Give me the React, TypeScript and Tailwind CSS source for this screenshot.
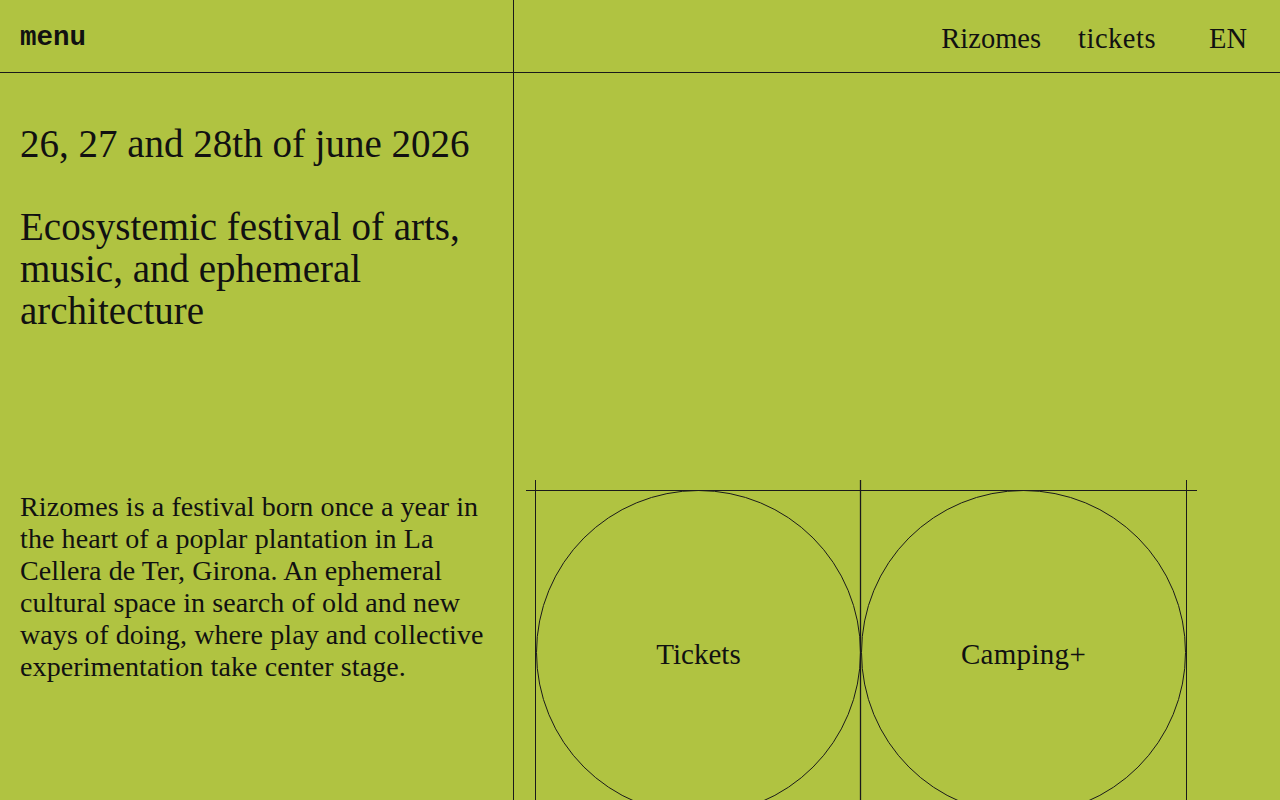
import React from "react";

const serif = { fontFamily: '"Liberation Serif", "Times New Roman", serif' };

const para = [
  "Rizomes is a festival born once a year in",
  "the heart of a poplar plantation in La",
  "Cellera de Ter, Girona. An ephemeral",
  "cultural space in search of old and new",
  "ways of doing, where play and collective",
  "experimentation take center stage.",
];

export default function App() {
  return (
    <div className="w-[1280px] h-[800px] overflow-hidden bg-[#b0c341] text-[#111] flex" style={serif}>
      <div className="w-[514px] shrink-0 border-r border-[#1a1a1a] flex flex-col">
        <div className="h-[73px] shrink-0 border-b border-[#1a1a1a] flex items-center px-5 pt-[4px]">
          <span className="text-[27.5px] leading-none font-bold" style={{ fontFamily: '"Liberation Mono", "Courier New", monospace' }}>menu</span>
        </div>
        <div className="px-5">
          <h2 className="mt-[49px] text-[39px] leading-[44px] font-normal whitespace-nowrap">26, 27 and 28th of june 2026</h2>
          <h1 className="mt-[40px] text-[39px] leading-[42px] font-normal">Ecosystemic festival of arts, music, and ephemeral architecture</h1>
          <p className="mt-[159px] text-[28px] leading-[32px] tracking-[0.1px]">
            {para.map((l) => (
              <span key={l} className="block whitespace-nowrap">{l}</span>
            ))}
          </p>
        </div>
      </div>
      <div className="flex-1 flex flex-col">
        <div className="h-[73px] shrink-0 border-b border-[#1a1a1a] flex items-center justify-end pr-[33px] pt-[6px] text-[28.5px] leading-none">
          <span>Rizomes</span>
          <span className="ml-[37px] tracking-[0.5px]">tickets</span>
          <span className="ml-[53px]">EN</span>
        </div>
        <div className="pl-[12px] pt-[407px] shrink-0">
          <div className="relative w-[671px] h-[340px]">
            <svg className="absolute inset-0" width="671" height="340" viewBox="0 0 671 340">
              <line x1="0" y1="10.5" x2="671" y2="10.5" stroke="#1a1a1a" strokeWidth="1" />
              <line x1="9.5" y1="0" x2="9.5" y2="340" stroke="#1a1a1a" strokeWidth="1" />
              <line x1="334.5" y1="0" x2="334.5" y2="340" stroke="#1a1a1a" strokeWidth="1.3" />
              <line x1="660.5" y1="0" x2="660.5" y2="340" stroke="#1a1a1a" strokeWidth="1" />
            </svg>
            <div className="absolute left-[10px] top-[10px] flex">
              <a className="w-[325px] h-[325px] rounded-full border border-[#1a1a1a] flex items-center justify-center text-[29px] leading-none pt-[4px]">Tickets</a>
              <a className="w-[325px] h-[325px] rounded-full border border-[#1a1a1a] flex items-center justify-center text-[29px] leading-none pt-[4px] tracking-[0.3px]">Camping+</a>
            </div>
          </div>
        </div>
      </div>
    </div>
  );
}
